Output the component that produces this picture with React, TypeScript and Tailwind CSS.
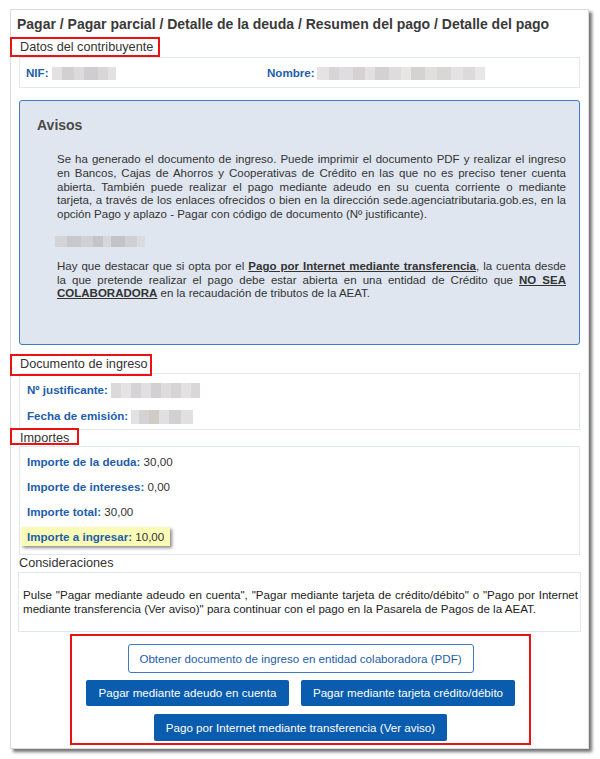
import React from "react";

const FONT = { fontFamily: '"Liberation Sans", Arial, sans-serif' };

// pixelated blur patch (redacted data)
function Blur({ cells, h }: { cells: [number, string][]; h: number }) {
  return (
    <span className="inline-flex align-middle" style={{ height: h }}>
      {cells.map(([w, c], i) => (
        <span key={i} style={{ width: w, background: c }} className="h-full" />
      ))}
    </span>
  );
}

function Header({ text, boxW, boxH }: { text: string; boxW: number; boxH: number }) {
  return (
    <div className="relative h-[16px] text-[12.7px] leading-[16px] text-[#333] pl-[1px]">
      {text}
      <span
        className="absolute left-[-9px] top-[-2px] border-2 border-[#ee1111]"
        style={{ width: boxW, height: boxH }}
      />
    </div>
  );
}

const Label = ({ children }: { children: React.ReactNode }) => (
  <span className="font-bold text-[#1d5dab]">{children}</span>
);

function JLine({ children, last }: { children: React.ReactNode; last?: boolean }) {
  return (
    <div className={last ? "whitespace-nowrap" : "text-justify [text-align-last:justify] whitespace-nowrap"}>
      {children}
    </div>
  );
}

export default function App() {
  return (
    <div className="w-[600px] h-[759px] bg-white overflow-hidden" style={FONT}>
      <div className="ml-[10px] mt-[9px] w-[579px] h-[740px] bg-white border border-[#dcdcdc] shadow-[3px_3px_3px_rgba(0,0,0,0.55)] px-[8px] pt-[5px]">
        <h1 className="text-[14px] leading-[18px] font-bold text-[#3a3a3a] -ml-[2px] whitespace-nowrap">
          Pagar / Pagar parcial / Detalle de la deuda / Resumen del pago / Detalle del pago
        </h1>

        <div className="mt-[6px]">
          <Header text="Datos del contribuyente" boxW={150} boxH={20} />
        </div>
        <div className="mt-[2px] h-[31px] border border-[#dfe7f0] flex items-center pl-[6px] text-[11.6px]">
          <div className="w-[241px] flex items-center">
            <Label>NIF:</Label>
            <span className="ml-[3px]">
              <Blur h={13} cells={[[10, "#e4e1e3"], [12, "#d3d0d2"], [10, "#dcdadb"], [14, "#cfcdcf"], [10, "#d8d6d7"], [8, "#e3e1e2"]]} />
            </span>
          </div>
          <div className="flex items-center">
            <Label>Nombre:</Label>
            <span className="ml-[2px]">
              <Blur
                h={13}
                cells={[
                  [12, "#e6e3e5"], [10, "#d8d4d7"], [14, "#e0dde0"], [12, "#d6d2d3"], [10, "#e3e0e1"],
                  [14, "#d4d1d3"], [12, "#dfdcdd"], [10, "#e7e6e6"], [14, "#d5d2d2"], [12, "#e1dede"],
                  [14, "#d9d6d6"], [12, "#e4e2e3"], [12, "#dcdada"], [10, "#e8e6e7"],
                ]}
              />
            </span>
          </div>
        </div>

        <div className="mt-[12px] h-[245px] bg-[#dfe6ef] border border-[#3c7cc4] rounded-[3px] pl-[17px] pr-[13px] pt-[16px] text-[#333]">
          <div className="text-[14px] leading-[17px] font-bold text-[#4a4a4a]">Avisos</div>
          <div className="mt-[19px] ml-[20px] text-[11.5px] leading-[13.75px]">
            <JLine>Se ha generado el documento de ingreso. Puede imprimir el documento PDF y realizar el ingreso</JLine>
            <JLine>en Bancos, Cajas de Ahorros y Cooperativas de Crédito en las que no es preciso tener cuenta</JLine>
            <JLine>abierta. También puede realizar el pago mediante adeudo en su cuenta corriente o mediante</JLine>
            <JLine>tarjeta, a través de los enlaces ofrecidos o bien en la dirección sede.agenciatributaria.gob.es, en la</JLine>
            <JLine last>opción Pago y aplazo - Pagar con código de documento (Nº justificante).</JLine>
          </div>
          <div className="mt-[14px] ml-[18px] h-[11px] flex">
            <Blur h={11} cells={[[12, "#d3d4d8"], [14, "#c8c9cd"], [12, "#d0d1d5"], [10, "#c4c5c9"], [8, "#d6d7db"], [14, "#c3c4c8"], [12, "#cfd0d4"], [8, "#dadbe0"]]} />
          </div>
          <div className="mt-[13px] ml-[20px] text-[11.5px] leading-[13.75px]">
            <JLine>
              Hay que destacar que si opta por el{" "}
              <span className="font-bold underline underline-offset-[1px]">Pago por Internet mediante transferencia</span>, la cuenta desde
            </JLine>
            <JLine>
              la que pretende realizar el pago debe estar abierta en una entidad de Crédito que{" "}
              <span className="font-bold underline underline-offset-[1px]">NO SEA</span>
            </JLine>
            <JLine last>
              <span className="font-bold underline underline-offset-[1px]">COLABORADORA</span> en la recaudación de tributos de la AEAT.
            </JLine>
          </div>
        </div>

        <div className="mt-[11px]">
          <Header text="Documento de ingreso" boxW={142} boxH={22} />
        </div>
        <div className="mt-[1px] h-[57px] border border-[#dfe7f0] pl-[7px] pt-[8px] text-[11.6px] leading-[16px]">
          <div className="flex items-center h-[16px]">
            <Label>Nº justificante:</Label>
            <span className="ml-[3px]">
              <Blur h={15} cells={[[10, "#dcd9db"], [10, "#e5e3e4"], [10, "#d5d3d5"], [10, "#e1dfe0"], [10, "#d2d0d2"], [10, "#dedcdd"], [10, "#d6d4d5"], [10, "#e3e1e2"], [9, "#d9d7d8"]]} />
            </span>
          </div>
          <div className="flex items-center h-[16px] mt-[10px]">
            <Label>Fecha de emisión:</Label>
            <span className="ml-[3px]">
              <Blur h={14} cells={[[8, "#e2e1e3"], [10, "#d3d3d6"], [10, "#cfccc6"], [10, "#e0dfe1"], [12, "#d2d0d2"], [12, "#e1e0e1"]]} />
            </span>
          </div>
        </div>

        <div className="mt-[0px]">
          <Header text="Importes" boxW={69} boxH={17} />
        </div>
        <div className="h-[109px] border border-[#dfe7f0] pt-[7px] text-[11.6px] leading-[16px] text-[#333]">
          <div className="pl-[7px] h-[16px]"><Label>Importe de la deuda:</Label> 30,00</div>
          <div className="pl-[7px] h-[16px] mt-[9px]"><Label>Importe de intereses:</Label> 0,00</div>
          <div className="pl-[7px] h-[16px] mt-[9px]"><Label>Importe total:</Label> 30,00</div>
          <div className="mt-[7px] ml-[1px] w-[149px] h-[19px] flex items-center pl-[6px] bg-[#fbfbb8] shadow-[2px_2px_3px_rgba(0,0,0,0.45)] whitespace-nowrap">
            <Label>Importe a ingresar:</Label>&nbsp;10,00
          </div>
        </div>

        <div className="h-[16px] text-[12.7px] leading-[16px] text-[#333]">Consideraciones</div>
        <div className="mt-[1px] -mx-[1px] h-[60px] border border-[#dfe7f0] pl-[4px] pr-[2px] pt-[15px] text-[11.6px] leading-[14px] text-[#222]">
          <JLine>
            Pulse "Pagar mediante adeudo en cuenta", "Pagar mediante tarjeta de crédito/débito" o "Pago por Internet
          </JLine>
          <JLine last>mediante transferencia (Ver aviso)" para continuar con el pago en la Pasarela de Pagos de la AEAT.</JLine>
        </div>

        <div className="mt-[2px] ml-[51px] w-[461px] h-[111px] border-2 border-[#ee1111] flex flex-col items-center pt-[8px] text-[11.6px] whitespace-nowrap">
          <button className="w-[346px] h-[29px] bg-white border border-[#3c7cc4] rounded-[3px] text-[#1d5dab]">
            Obtener documento de ingreso en entidad colaboradora (PDF)
          </button>
          <div className="flex gap-[12px] mt-[7px]">
            <button className="w-[203px] h-[26px] bg-[#0a5cae] rounded-[2px] text-white">
              Pagar mediante adeudo en cuenta
            </button>
            <button className="w-[214px] h-[26px] bg-[#0a5cae] rounded-[2px] text-white">
              Pagar mediante tarjeta crédito/débito
            </button>
          </div>
          <button className="mt-[8px] w-[293px] h-[27px] bg-[#0a5cae] rounded-[2px] text-white">
            Pago por Internet mediante transferencia (Ver aviso)
          </button>
        </div>
      </div>
    </div>
  );
}
